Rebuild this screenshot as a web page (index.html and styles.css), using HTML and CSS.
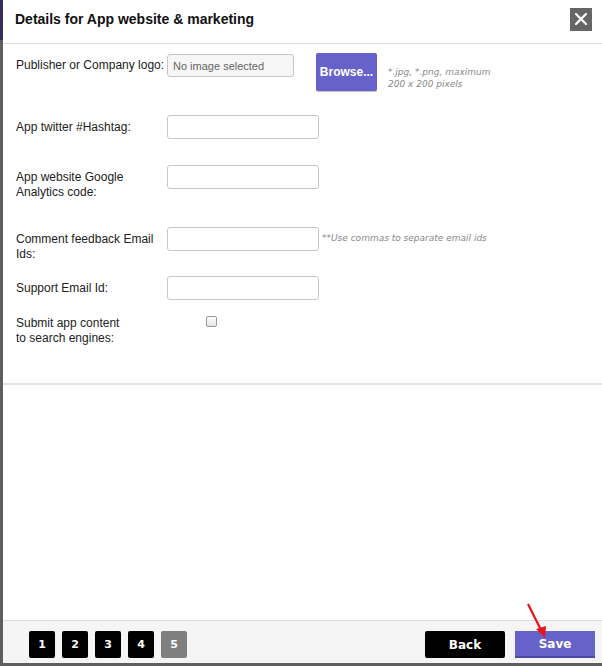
FILE: index.html
```html
<!DOCTYPE html>
<html lang="en">
<head>
    <meta charset="UTF-8">
    <meta name="viewport" content="width=device-width, initial-scale=1.0">
    <title>Details for App website &amp; marketing</title>
    <link rel="stylesheet" href="styles.css">
</head>
<body>
    <div class="modal">
        <div class="modal-header">
            <div class="modal-title">Details for App website &amp; marketing</div>
            <button class="close-btn" aria-label="Close">
                <svg width="12" height="12" viewBox="0 0 12 12">
                    <path d="M1 1 L11 11 M11 1 L1 11" stroke="#fff" stroke-width="2.2" stroke-linecap="square"/>
                </svg>
            </button>
        </div>

        <div class="modal-body">
            <div class="form">
                <div class="row">
                    <label class="label">Publisher or Company logo:</label>
                    <div class="field">
                        <div class="file-name">No image selected</div>
                        <button class="browse-btn">Browse...</button>
                        <div class="hint hint-logo">*.jpg, *.png, maximum<br>200 x 200 pixels</div>
                    </div>
                </div>

                <div class="row">
                    <label class="label">App twitter #Hashtag:</label>
                    <div class="field">
                        <input type="text" class="text-input">
                    </div>
                </div>

                <div class="row">
                    <label class="label">App website Google<br>Analytics code:</label>
                    <div class="field">
                        <input type="text" class="text-input">
                    </div>
                </div>

                <div class="row">
                    <label class="label">Comment feedback Email<br>Ids:</label>
                    <div class="field">
                        <input type="text" class="text-input">
                        <div class="hint hint-inline">**Use commas to separate email ids</div>
                    </div>
                </div>

                <div class="row">
                    <label class="label">Support Email Id:</label>
                    <div class="field">
                        <input type="text" class="text-input">
                    </div>
                </div>

                <div class="row">
                    <label class="label label-tight">Submit app content<br>to search engines:</label>
                    <div class="field">
                        <span class="checkbox"></span>
                    </div>
                </div>
            </div>
        </div>

        <div class="modal-footer">
            <div class="steps">
                <span class="step">1</span>
                <span class="step">2</span>
                <span class="step">3</span>
                <span class="step">4</span>
                <span class="step current">5</span>
            </div>
            <div class="actions">
                <button class="btn btn-back">Back</button>
                <button class="btn btn-save">Save</button>
            </div>
        </div>

        <svg class="arrow" width="40" height="50" viewBox="0 0 40 50">
            <path d="M4 4 L18 32" stroke="#e8141c" stroke-width="2.2" fill="none"/>
            <path d="M21 38 L12 29 L22 26 Z" fill="#e8141c"/>
        </svg>
    </div>
</body>
</html>
```

FILE: styles.css
```css
* {
    margin: 0;
    padding: 0;
    box-sizing: border-box;
}

body {
    width: 602px;
    height: 666px;
    overflow: hidden;
    font-family: "Liberation Sans", Arial, sans-serif;
    background: linear-gradient(180deg, #3b2d5a 0px, #3b2d5a 40px, #5e5e5e 40px, #5e5e5e 100%);
    color: #222;
}

.modal {
    position: relative;
    width: 599px;
    height: 663px;
    margin-left: 3px;
    background: #fff;
    display: flex;
    flex-direction: column;
}

.modal-header {
    height: 44px;
    padding: 0 10px 0 12px;
    border-bottom: 1px solid #dcdcdc;
    display: flex;
    justify-content: space-between;
    align-items: center;
}

.modal-title {
    font-size: 14px;
    font-weight: bold;
    color: #111;
    margin-top: -5px;
}

.close-btn {
    width: 22px;
    height: 23px;
    background: #666;
    border: none;
    display: flex;
    align-items: center;
    justify-content: center;
    margin-top: -5px;
}

.modal-body {
    flex: 1;
}

.form {
    height: 341px;
    padding: 9px 0 0 13px;
    border-bottom: 2px solid #e2e2e2;
    display: grid;
    grid-template-rows: 62px 50px 62px 49px 40px auto;
}

.row {
    display: flex;
    align-items: flex-start;
}

.label {
    width: 151px;
    font-size: 12px;
    line-height: 15px;
    padding-top: 5px;
    color: #222;
}

.label-tight {
    padding-top: 0;
}

.field {
    display: flex;
    align-items: flex-start;
}

.file-name {
    width: 127px;
    height: 23px;
    margin-top: 1px;
    padding: 5px 5px;
    font-size: 11px;
    color: #666;
    background: #f6f6f6;
    border: 1px solid #c8c8c8;
    border-radius: 3px;
}

.browse-btn {
    width: 61px;
    height: 38px;
    margin-left: 22px;
    background: #6662c9;
    color: #fff;
    border: none;
    border-radius: 2px;
    font-family: "Liberation Sans", Arial, sans-serif;
    font-size: 12px;
    font-weight: bold;
    box-shadow: 0 1px 1px rgba(0, 0, 0, 0.25);
}

.text-input {
    width: 152px;
    height: 24px;
    border: 1px solid #c8c8c8;
    border-radius: 3px;
    background: #fff;
}

.hint {
    font-family: "DejaVu Sans", Verdana, sans-serif;
    font-size: 9px;
    font-style: italic;
    color: #888;
    line-height: 12px;
}

.hint-logo {
    margin-left: 11px;
    padding-top: 13px;
}

.hint-inline {
    margin-left: 3px;
    padding-top: 5px;
}

.checkbox {
    display: block;
    width: 11px;
    height: 11px;
    margin-left: 39px;
    border: 1px solid #999;
    border-radius: 2px;
    background: linear-gradient(#fff, #e4e4e4);
}

.modal-footer {
    height: 43px;
    border-top: 1px solid #dcdcdc;
    background: #f5f5f5;
    padding: 10px 4px 0 26px;
    display: flex;
    justify-content: space-between;
    align-items: flex-start;
}

.steps {
    display: flex;
    gap: 7px;
}

.step {
    width: 26px;
    height: 27px;
    background: #000;
    color: #fff;
    border-radius: 2px;
    font-family: "DejaVu Sans", Verdana, sans-serif;
    font-size: 11px;
    font-weight: bold;
    display: flex;
    align-items: center;
    justify-content: center;
}

.step.current {
    background: #7f7f7f;
}

.actions {
    display: flex;
    gap: 10px;
    margin-right: 3px;
}

.btn {
    width: 80px;
    height: 27px;
    border: none;
    color: #fff;
    font-family: "DejaVu Sans", Verdana, sans-serif;
    font-size: 12px;
    font-weight: bold;
}

.btn-back {
    background: #000;
    border-radius: 2px;
}

.btn-save {
    background: #6563c9;
    border-bottom: 2px solid #4a48a8;
}

.arrow {
    position: absolute;
    left: 521px;
    top: 600px;
}
```
